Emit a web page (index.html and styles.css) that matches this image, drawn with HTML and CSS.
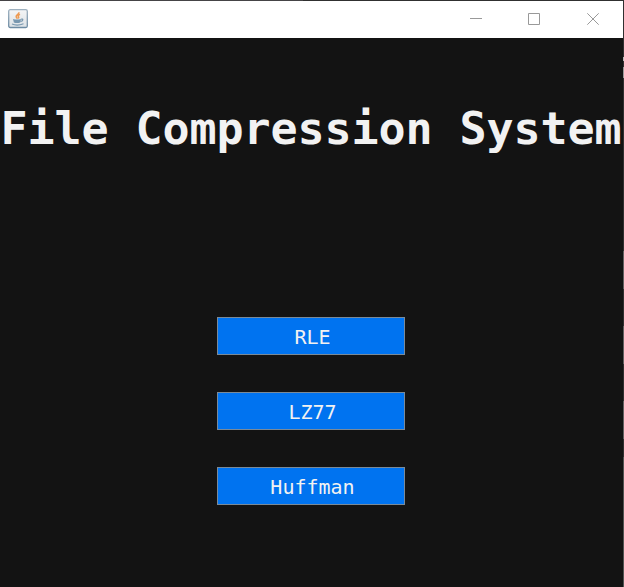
FILE: index.html
```html
<!DOCTYPE html>
<html lang="en">
<head>
<meta charset="utf-8">
<title>File Compression System</title>
<link rel="stylesheet" href="styles.css">
</head>
<body>
<div class="desktop">
  <div class="window">
    <header class="titlebar">
      <svg class="app-icon" width="20" height="20" viewBox="0 0 20 20">
        <defs><linearGradient id="tile" x1="0" y1="0" x2="0" y2="1"><stop offset="0" stop-color="#f4f5f6"/><stop offset="1" stop-color="#dce1e5"/></linearGradient>
        <linearGradient id="edge" x1="0" y1="0" x2="0" y2="1"><stop offset="0" stop-color="#9db0bf"/><stop offset="1" stop-color="#6d8ba3"/></linearGradient></defs>
        <rect x=".7" y=".7" width="18.6" height="17.8" rx="1.5" fill="url(#tile)" stroke="url(#edge)" stroke-width="1.3"/>
        <path d="M10.8 3.2c.8 2-3.4 2.9-2.6 4.7.2.7 1 1.1 1 1.8M12 5.4c-2.3 1.1-2 1.8-1.4 2.6.3.5 0 1-.4 1.4" fill="none" stroke="#ee9a52" stroke-width="1.6"/>
        <path d="M5 10q4 1 8 0l-.7 3.6q-3.2 1-6.4 0z" fill="#7897af"/>
        <path d="M13 10.2c2.6-.8 2.4 1.8-.6 2.3M4 15q5 2.2 11.5-.2" fill="none" stroke="#7897af" stroke-width="1.2"/>
      </svg>
      <svg class="controls" width="130" height="14" viewBox="0 0 130 14" fill="none" stroke="#999">
        <path d="M0 7.5h12"/>
        <path d="M58.5 2.5h11v11h-11z"/>
        <path d="M117.3 2.3l11.4 11.4m0-11.4l-11.4 11.4"/>
      </svg>
    </header>
    <main class="content">
      <h1 class="title">File Compression System</h1>
      <div class="actions">
        <button class="action">RLE</button>
        <button class="action">LZ77</button>
        <button class="action">Huffman</button>
      </div>
    </main>
  </div>
</div>
</body>
</html>
```

FILE: styles.css
```css
* { box-sizing: border-box; }
body { margin: 0; overflow: hidden; }
.desktop {
  width: 624px;
  height: 587px;
  padding: 1px 1px 0 0;
  background:
    linear-gradient(#bbb 0 0) 623px 57px / 1px 4px no-repeat,
    linear-gradient(#999 0 0) 623px 67px / 1px 11px no-repeat,
    linear-gradient(#606060 0 0) 623px 251px / 1px 38px no-repeat,
    linear-gradient(#606060 0 0) 623px 326px / 1px 38px no-repeat,
    linear-gradient(#606060 0 0) 623px 401px / 1px 38px no-repeat,
    linear-gradient(#505452 0 0) 623px 457px / 1px 130px no-repeat,
    linear-gradient(90deg, #454446 0 303px, #303030 303px) 0 0 / 100% 1px no-repeat,
    #303030;
}
.window {
  height: 586px;
  display: flex;
  flex-direction: column;
  overflow: hidden;
  background: #131313;
}
.titlebar {
  height: 37px;
  flex: none;
  display: flex;
  align-items: flex-start;
  justify-content: space-between;
  padding: 8px 23px 0 8px;
  background: #fff;
}
.controls { margin-top: 2px; }
.content {
  flex: 1;
  display: flex;
  flex-direction: column;
  align-items: center;
  padding: 61px 1px 0 0;
  font-family: "DejaVu Sans Mono", monospace;
}
.title {
  margin: 0;
  color: #f2f2f2;
  font-size: 45px;
  line-height: 60px;
  font-weight: 700;
  letter-spacing: -0.09px;
  white-space: nowrap;
}
.actions {
  display: flex;
  flex-direction: column;
  gap: 37px;
  margin-top: 158px;
}
.action {
  width: 188px;
  height: 38px;
  padding: 2px 0 0 3px;
  border: 1px solid #7a8a99;
  background: #0073f0;
  color: #f2f2f2;
  font: 20px/34px "DejaVu Sans Mono", monospace;
}
```
